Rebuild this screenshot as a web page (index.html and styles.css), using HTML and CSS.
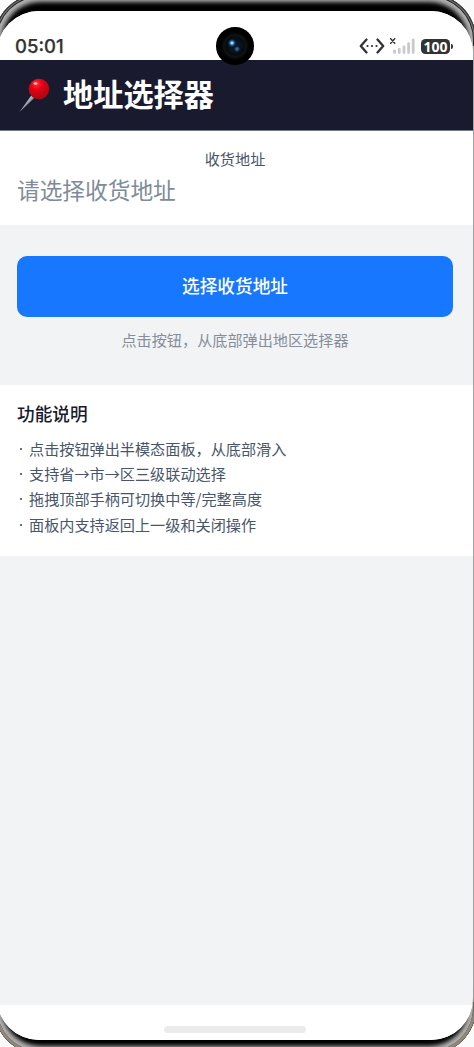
FILE: index.html
```html
<!DOCTYPE html>
<html lang="zh-CN">
<head>
<meta charset="utf-8">
<title>地址选择器</title>
<link rel="stylesheet" href="styles.css">
</head>
<body>
<div class="device">
  <main class="screen">
    <div class="status">
      <span class="time">05:01</span>
      <div class="indicators">
        <svg class="dev" width="26" height="16" viewBox="0 0 26 16" fill="none" stroke="#333" stroke-width="2.3" stroke-linecap="round" stroke-linejoin="round"><path d="M7.5 1.5 1.8 8l5.700 6.500M18.500 1.500 24.200 8l-5.700 6.500"/><path d="M8.500 8h.01M13 8h.01M17.500 8h.01" stroke-width="2.200"/></svg>
        <svg class="signal" width="27" height="18" viewBox="0 0 27 18" fill="none" stroke-linecap="round"><path d="m1.700 1.800 4 4.400m0-4.400-4 4.400" stroke="#333" stroke-width="1.500"/><path d="M5.500 14v1.500M10.300 12.500v3M15 10v5.500M19.600 6.700v8.800M24.200 3v12.500" stroke="#c9c9c9" stroke-width="2.800"/></svg>
        <span class="battery">100</span><i class="nub"></i>
      </div>
    </div>
    <header class="header">
      <svg class="pin" width="32" height="36" viewBox="0 0 32 36">
        <defs>
          <radialGradient id="ball" cx=".38" cy=".25" r=".75"><stop offset="0" stop-color="#ff3038"/><stop offset=".4" stop-color="#e50012"/><stop offset="1" stop-color="#a50a12"/></radialGradient>
          <linearGradient id="needle" x1="0" y1="0" x2="1" y2="1"><stop offset=".4" stop-color="#c3ccd2"/><stop offset=".65" stop-color="#596269"/></linearGradient>
        </defs>
        <path d="m.5 35 11.800-16.500 3 2.500Z" fill="url(#needle)"/>
        <circle cx="20" cy="12" r="10.300" fill="url(#ball)"/>
        <ellipse cx="16.500" cy="6.500" rx="2" ry="1.300" fill="#ffb5b5"/>
      </svg>
      <h1 class="title">地址选择器</h1>
    </header>
    <section class="address">
      <div class="label">收货地址</div>
      <div class="value">请选择收货地址</div>
    </section>
    <section class="action">
      <button class="choose">选择收货地址</button>
      <p class="hint">点击按钮，从底部弹出地区选择器</p>
    </section>
    <section class="notes">
      <h2 class="heading">功能说明</h2>
      <ul class="list">
        <li>点击按钮弹出半模态面板，从底部滑入</li>
        <li>支持省→市→区三级联动选择</li>
        <li>拖拽顶部手柄可切换中等/完整高度</li>
        <li>面板内支持返回上一级和关闭操作</li>
      </ul>
    </section>
    <div class="space"></div>
    <footer class="nav"><div class="handle"></div></footer>
  </main>
  <div class="camera"></div>
</div>
</body>
</html>
```
FILE: styles.css
```css
* { box-sizing: border-box; }
html, body { margin: 0; height: 1047px; overflow: hidden; background: #fafafa; }
body { font-family: "Noto Sans CJK SC", "Noto Sans", sans-serif; }
h1, h2, p, ul { margin: 0; padding: 0; }
.device {
  position: relative;
  width: 482px;
  height: 1060px;
  margin: -6px 0 0 -6px;
  padding: 17px 3px 14px;
  border-radius: 46px;
  background: #000;
  box-shadow: inset 0 0 0 1px #333, inset 0 0 0 2px #777, inset 0 0 0 3px #222, inset 0 0 4px 8px #b0b0b0;
}
.device::after {
  content: "";
  position: absolute;
  left: 0; right: 0; bottom: 0;
  height: 70px;
  border: 3px solid #928878;
  border-top: 0;
  border-radius: 0 0 46px 46px;
  -webkit-mask: linear-gradient(transparent, #000 40px);
  mask: linear-gradient(transparent, #000 40px);
}
.device::before {
  content: "";
  position: absolute;
  right: 2px; top: 52px; bottom: 52px;
  width: 1px;
  background: #a0a0a0;
}
.screen {
  display: flex;
  flex-direction: column;
  width: 476px;
  height: 1029px;
  overflow: hidden;
  border-radius: 42px;
  background: #f1f3f5;
}
.status {
  display: flex;
  justify-content: space-between;
  height: 49px;
  padding: 24px 20px 0 18px;
  background: #fff;
}
.time { font: 500 18.500px/22px Inter, sans-serif; color: #333; -webkit-text-stroke: .25px #333; }
.indicators { display: flex; height: 22px; align-items: center; }
.signal { margin: -1px 5px 0 4px; }
.battery {
  width: 29px; height: 15px;
  border-radius: 4.5px;
  background: #333;
  color: #fff;
  font: 700 14px/15px "Noto Sans", sans-serif;
  text-align: center;
}
.nub { width: 2px; height: 5px; margin-left: 1px; border-radius: 0 2px 2px 0; background: #333; }
.header {
  display: flex;
  height: 71px;
  padding: 17px 0 0 22px;
  background: #1a1a2e;
  border-bottom: 1px solid #77778a;
}
.title { margin: -2px 0 0 12px; font-size: 30.200px; line-height: 36px; font-weight: 700; color: #fff; }
.address { height: 94px; padding: 16px 20px 0 20px; background: #fff; }
.label { font-size: 15.150px; line-height: 22px; text-align: center; color: #4a5568; }
.value { font-size: 22.700px; line-height: 32px; margin-top: 5px; color: #808b99; }
.action { height: 160px; padding: 31px 20px 0; }
.choose {
  display: block;
  width: 436px; height: 61px;
  border: 0;
  padding: 0 0 1px;
  border-radius: 10px;
  background: #1777ff;
  color: #fff;
  font: 500 17.670px/26px "Noto Sans CJK SC", sans-serif;
}
.hint { margin-top: 11px; font-size: 15.150px; line-height: 22px; text-align: center; color: #868e99; }
.notes { height: 171px; padding: 16px 20px 0; background: #fff; }
.heading { font-size: 17.670px; line-height: 26px; font-weight: 500; color: #1a1a2e; }
.list { margin-top: 9px; list-style: none; font-size: 15.150px; line-height: 25.200px; color: #4a5568; }
.list li { display: flex; }
.list li::before { content: ""; width: 2px; height: 2px; margin: 12px 7px 0 3px; background: #667080; }
.space { flex: 1; }
.nav { height: 35px; padding-top: 21px; background: #fff; }
.handle { width: 142px; height: 7px; margin: 0 auto; border-radius: 4px; background: #ebebeb; }
.camera {
  position: absolute;
  left: 222px; top: 33px;
  width: 37.500px; height: 37.500px;
  border-radius: 50%;
  background:
    radial-gradient(circle at 16px 16px, #a5d9ff 0 1px, #2666a0 2px, transparent 4px),
    radial-gradient(circle at 21px 22px, #3b7298 0 .5px, transparent 3px),
    radial-gradient(circle, #07172a 0 4px, #091018 7px, #080b0e 9px, #111213 11px, #050505 13px, #000 15px);
}
```
